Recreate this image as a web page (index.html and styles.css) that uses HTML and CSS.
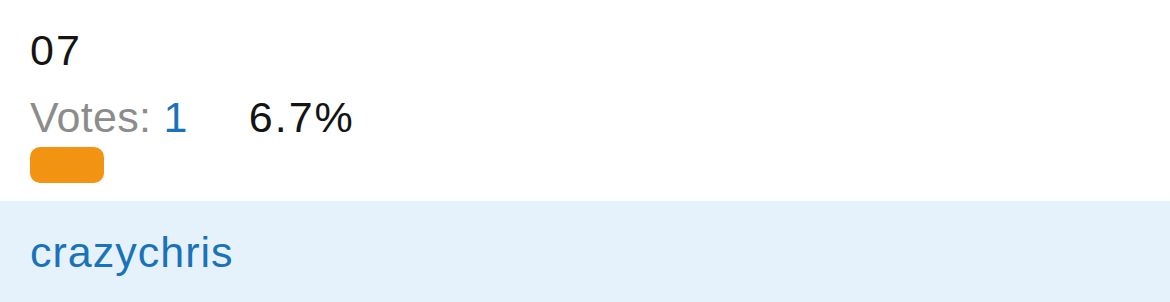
FILE: index.html
```html
<!DOCTYPE html>
<html>
<head>
<meta charset="utf-8">
<link rel="stylesheet" href="styles.css">
</head>
<body>
<div class="option">
  <div class="title">07</div>
  <div class="stats">
    <span class="votes">Votes: <span class="count">1</span></span>
    <span class="pct">6.7%</span>
  </div>
  <div class="bar" style="width:74px"></div>
</div>
<div class="voter">
  <a class="name">crazychris</a>
</div>
</body>
</html>
```
FILE: styles.css
```css
html, body {
  margin: 0;
  padding: 0;
  background: #ffffff;
}
body {
  font-family: "Liberation Sans", Arial, sans-serif;
  font-size: 43px;
  line-height: 48px;
  color: #141414;
}
.option {
  padding: 26px 30px 18px 30px;
  height: 157px;
  box-sizing: border-box;
}
.title {
  height: 48px;
  letter-spacing: 2px;
}
.stats {
  margin-top: 19px;
  display: flex;
  gap: 61px;
  height: 48px;
}
.votes {
  color: #8c8c8c;
  letter-spacing: 0.3px;
}
.count {
  color: #1a73b8;
}
.pct {
  color: #141414;
  letter-spacing: 2px;
}
.bar {
  margin-top: 6px;
  height: 36px;
  border-radius: 10px;
  background: #f39312;
}
.voter {
  margin-top: 44px;
  background: #e6f2fb;
  height: 101px;
  padding: 27px 30px 0 30px;
  box-sizing: border-box;
}
.name {
  color: #1a73b8;
  text-decoration: none;
  letter-spacing: 1px;
}
```
